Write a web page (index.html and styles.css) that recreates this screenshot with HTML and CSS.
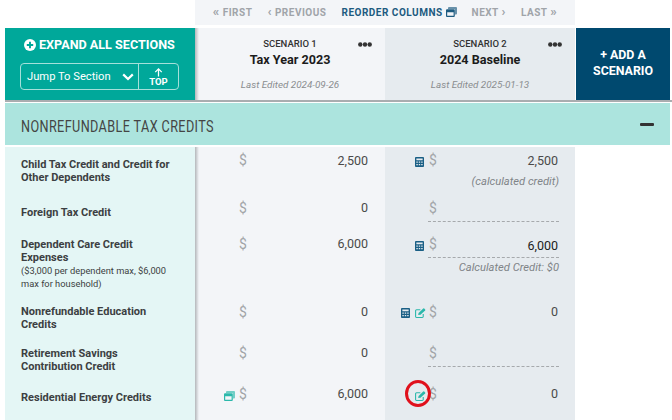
FILE: index.html
```html
<!DOCTYPE html>
<html lang="en">
<head>
  <meta charset="UTF-8" />
  <title>Scenario Compare</title>
  <link rel="stylesheet" href="styles.css">
</head>
<body>
  <svg class="defs" width="0" height="0">
    <symbol id="calc" viewBox="0 0 10 11">
      <path fill="currentColor" fill-rule="evenodd" d="M1 0h8a1 1 0 0 1 1 1v9a1 1 0 0 1-1 1H1a1 1 0 0 1-1-1V1a1 1 0 0 1 1-1zm.5 1.5v2h7v-2zm0 3.5v1.3h1.6V5zm2.7 0v1.3h1.6V5zm2.7 0v1.3h1.6V5zM1.5 7.6v1.6h1.6V7.6zm2.7 0v1.6h1.6V7.6zm2.7 0v1.6h1.6V7.6z"/>
    </symbol>
    <symbol id="edit" viewBox="0 0 12 11">
      <path fill="none" stroke="currentColor" stroke-width="1.2" d="M9 6.5V9.4a1 1 0 0 1-1 1H1.6a1 1 0 0 1-1-1V3a1 1 0 0 1 1-1h4.2"/>
      <path fill="currentColor" d="M3.4 7.8l.5-2.2L9 .6a.8.8 0 0 1 1.1 0l1 1a.8.8 0 0 1 0 1.1L6 7.4z"/>
    </symbol>
    <symbol id="windows" viewBox="0 0 11 10">
      <path fill="currentColor" opacity=".65" d="M3 0h7a1 1 0 0 1 1 1v5.5a1 1 0 0 1-1 1H9V3a1 1 0 0 0-1-1H2V1a1 1 0 0 1 1-1z"/>
      <path fill="currentColor" fill-rule="evenodd" d="M1 2.2h6.8a1 1 0 0 1 1 1V9a1 1 0 0 1-1 1H1a1 1 0 0 1-1-1V3.2a1 1 0 0 1 1-1zm.2 3V8.8h6.4V5.2z"/>
    </symbol>
    <symbol id="dots" viewBox="0 0 14 5">
      <circle cx="2.3" cy="2.5" r="2.2" fill="currentColor"/>
      <circle cx="7" cy="2.5" r="2.2" fill="currentColor"/>
      <circle cx="11.7" cy="2.5" r="2.2" fill="currentColor"/>
    </symbol>
  </svg>

  <nav class="pager">
    <span class="pager-item"><span class="arr">&laquo;</span> FIRST</span>
    <span class="pager-item"><span class="arr">&lsaquo;</span> PREVIOUS</span>
    <span class="pager-item reorder">REORDER COLUMNS <svg class="icon-win"><use href="#windows"/></svg></span>
    <span class="pager-item">NEXT <span class="arr">&rsaquo;</span></span>
    <span class="pager-item">LAST <span class="arr">&raquo;</span></span>
  </nav>

  <header class="head-row">
    <div class="tools">
      <div class="expand">
        <svg class="plus" viewBox="0 0 12 12"><circle cx="6" cy="6" r="6" fill="#fff"/><path d="M6 2.8v6.4M2.8 6h6.4" stroke="#00a89a" stroke-width="1.9"/></svg>
        <span>EXPAND ALL SECTIONS</span>
      </div>
      <div class="jump">
        <div class="jump-select">
          <span>Jump To Section</span>
          <svg class="chev" viewBox="0 0 12 8"><path d="M1.2 1.4L6 6l4.8-4.6" fill="none" stroke="#fff" stroke-width="2.2"/></svg>
        </div>
        <div class="jump-top">
          <svg class="arrow" viewBox="0 0 10 10"><path d="M5 9.5V1.2M1.4 4.6L5 1l3.6 3.6" fill="none" stroke="#fff" stroke-width="1.4"/></svg>
          <span>TOP</span>
        </div>
      </div>
    </div>
    <div class="scenario col-one">
      <svg class="dots"><use href="#dots"/></svg>
      <div class="scenario-num">SCENARIO 1</div>
      <div class="scenario-name">Tax Year 2023</div>
      <div class="scenario-date">Last Edited 2024-09-26</div>
    </div>
    <div class="scenario col-two">
      <svg class="dots"><use href="#dots"/></svg>
      <div class="scenario-num">SCENARIO 2</div>
      <div class="scenario-name">2024 Baseline</div>
      <div class="scenario-date">Last Edited 2025-01-13</div>
    </div>
    <div class="add-scenario">+ ADD A SCENARIO</div>
  </header>

  <section class="section-bar">
    <span class="section-title">NONREFUNDABLE TAX CREDITS</span>
    <span class="minus"></span>
  </section>

  <div class="rows">
    <div class="row r1">
      <div class="label"><b>Child Tax Credit and Credit for Other Dependents</b></div>
      <div class="cell col-one">
        <div class="field"><span class="icons"></span><div class="input"><span class="dollar">$</span><span class="val">2,500</span></div></div>
      </div>
      <div class="cell col-two">
        <div class="field"><span class="icons"><svg class="icon-calc"><use href="#calc"/></svg></span><div class="input"><span class="dollar">$</span><span class="val">2,500</span></div></div>
        <div class="note">(calculated credit)</div>
      </div>
    </div>

    <div class="row r2">
      <div class="label"><b>Foreign Tax Credit</b></div>
      <div class="cell col-one">
        <div class="field"><span class="icons"></span><div class="input"><span class="dollar">$</span><span class="val">0</span></div></div>
      </div>
      <div class="cell col-two">
        <div class="field"><span class="icons"></span><div class="input dashed"><span class="dollar">$</span></div></div>
      </div>
    </div>

    <div class="row r3">
      <div class="label"><b>Dependent Care Credit Expenses</b><small>($3,000 per dependent max, $6,000 max for household)</small></div>
      <div class="cell col-one">
        <div class="field"><span class="icons"></span><div class="input"><span class="dollar">$</span><span class="val">6,000</span></div></div>
      </div>
      <div class="cell col-two">
        <div class="field"><span class="icons"><svg class="icon-calc"><use href="#calc"/></svg></span><div class="input dashed"><span class="dollar">$</span><span class="val typed">6,000</span></div></div>
        <div class="note tight">Calculated Credit: $0</div>
      </div>
    </div>

    <div class="row r4">
      <div class="label"><b>Nonrefundable Education Credits</b></div>
      <div class="cell col-one">
        <div class="field"><span class="icons"></span><div class="input"><span class="dollar">$</span><span class="val">0</span></div></div>
      </div>
      <div class="cell col-two">
        <div class="field"><span class="icons"><svg class="icon-calc"><use href="#calc"/></svg><svg class="icon-edit"><use href="#edit"/></svg></span><div class="input"><span class="dollar">$</span><span class="val">0</span></div></div>
      </div>
    </div>

    <div class="row r5">
      <div class="label"><b>Retirement Savings Contribution Credit</b></div>
      <div class="cell col-one">
        <div class="field"><span class="icons"></span><div class="input"><span class="dollar">$</span><span class="val">0</span></div></div>
      </div>
      <div class="cell col-two">
        <div class="field"><span class="icons"></span><div class="input dashed"><span class="dollar">$</span></div></div>
      </div>
    </div>

    <div class="row r6">
      <div class="label"><b>Residential Energy Credits</b></div>
      <div class="cell col-one">
        <div class="field"><span class="icons"><svg class="icon-win teal"><use href="#windows"/></svg></span><div class="input"><span class="dollar">$</span><span class="val">6,000</span></div></div>
      </div>
      <div class="cell col-two">
        <div class="field"><span class="icons"><svg class="icon-edit"><use href="#edit"/></svg><span class="red-ring"></span></span><div class="input"><span class="dollar">$</span><span class="val">0</span></div></div>
      </div>
    </div>
  </div>
</body>
</html>
```

FILE: styles.css
```css
html, body {
  height: 100%;
}
body {
  margin: 0;
  padding-left: 5px;
  overflow: hidden;
  background-color: #fff;
  color: #444;
  font-family: Roboto, sans-serif;
  box-sizing: border-box;
}
.defs {
  position: absolute;
}

/* pager */
.pager {
  display: flex;
  justify-content: center;
  gap: 15px;
  margin-left: 190px;
  width: 380px;
  height: 25px;
  margin-bottom: 3px;
  background-color: #f3f5f8;
  font-size: 10px;
  font-weight: 700;
  letter-spacing: 0.5px;
  line-height: 25px;
  color: #a0a4a9;
}
.pager-item {
  white-space: nowrap;
}
.arr {
  font-size: 13px;
  line-height: 10px;
}
.reorder {
  color: #1d5b80;
}
.icon-win {
  width: 11px;
  height: 10px;
  vertical-align: -1px;
}
.icon-win.teal {
  margin-right: 1px;
  color: #2bb8ab;
}

/* header */
.head-row {
  display: grid;
  grid-template-columns: 190px 190px 190px 95px;
  height: 74px;
  border-bottom: 2px solid #a9adb0;
  box-sizing: border-box;
  margin-bottom: 1px;
}
.tools {
  background-color: #00a89a;
  color: #fff;
  padding: 9px 15px 0;
  box-sizing: border-box;
}
.expand {
  display: flex;
  align-items: center;
  gap: 3px;
  padding-left: 4px;
  font-size: 12.6px;
  font-weight: 700;
  line-height: 16px;
  white-space: nowrap;
}
.plus {
  flex: none;
  width: 12px;
  height: 12px;
}
.jump {
  display: flex;
  height: 27px;
  margin-top: 10px;
  width: 159px;
  border: 1px solid #a5e0da;
  border-radius: 4px;
  box-sizing: border-box;
}
.jump-select {
  flex: 1;
  display: flex;
  align-items: center;
  justify-content: space-between;
  padding: 0 4px 0 6px;
  border-right: 1px solid #a5e0da;
  font-size: 11.2px;
}
.chev {
  width: 12px;
  height: 8px;
}
.jump-top {
  width: 39px;
  display: flex;
  flex-direction: column;
  align-items: center;
  font-size: 9.5px;
  font-weight: 700;
  line-height: 10px;
  padding-top: 4px;
  box-sizing: border-box;
}
.arrow {
  width: 9px;
  height: 9px;
}
.scenario {
  position: relative;
  text-align: center;
  padding-top: 9px;
  box-sizing: border-box;
}
.col-one {
  background: linear-gradient(to right, #b4b7ba, #f3f5f8 4px);
}
.col-two {
  background-color: #e6ebef;
}
.dots {
  position: absolute;
  top: 14px;
  right: 13px;
  width: 14px;
  height: 5px;
  color: #333;
}
.scenario-num {
  font-size: 9.5px;
  font-weight: 500;
  line-height: 13px;
  color: #333;
}
.scenario-name {
  font-size: 12.6px;
  font-weight: 700;
  line-height: 20px;
  color: #1c1c1c;
}
.scenario-date {
  margin-top: 8px;
  font-size: 9.9px;
  font-style: italic;
  line-height: 14px;
  color: #8a8d90;
}
.add-scenario {
  margin-left: 1px;
  padding: 19px 10px 0;
  background-color: #00496f;
  color: #fff;
  font-size: 12.4px;
  font-weight: 700;
  line-height: 16px;
  text-align: center;
}

/* section bar */
.section-bar {
  display: flex;
  align-items: center;
  justify-content: space-between;
  width: 665px;
  height: 42px;
  padding: 0 16px;
  box-sizing: border-box;
  background-color: #ace4de;
  margin-bottom: 2px;
}
.section-title {
  display: inline-block;
  margin-top: 4px;
  font-size: 16px;
  letter-spacing: 0.5px;
  color: #444;
  white-space: nowrap;
  transform: scaleX(0.79);
  transform-origin: left center;
}
.minus {
  width: 14px;
  height: 3px;
  border-radius: 1px;
  background-color: #333;
}

/* rows */
.rows {
  display: flex;
  flex-direction: column;
}
.row {
  display: grid;
  grid-template-columns: 190px 190px 190px;
}
.label {
  padding: 0 22px 0 16px;
  background-color: #e4f6f5;
  font-size: 11px;
  line-height: 13px;
  color: #3c3f42;
}
.label b {
  display: block;
  font-weight: 700;
}
.label small {
  display: block;
  font-size: 9.3px;
  line-height: 13px;
}
.cell {
  box-sizing: border-box;
}
.field {
  display: flex;
}
.icons {
  position: relative;
  display: flex;
  justify-content: flex-end;
  gap: 3px;
  width: 43px;
  padding: 7px 2px 0 0;
  box-sizing: border-box;
}
.input {
  display: flex;
  justify-content: space-between;
  width: 131px;
  height: 24px;
  box-sizing: border-box;
  padding: 0 1px 0 1px;
  line-height: 20px;
  font-size: 12.5px;
}
.dashed {
  border-bottom: 1px dashed #a6a9ac;
}
.dollar {
  color: #a2a5a8;
  font-size: 14px;
}
.val {
  color: #4a4a4a;
}
.val.typed {
  padding-top: 2px;
  color: #222;
}
.note {
  width: 174px;
  margin-top: 0;
  text-align: right;
  font-size: 11.2px;
  font-style: italic;
  line-height: 16px;
  color: #808488;
}
.note.tight {
  margin-top: 2px;
}
.icon-calc {
  width: 9px;
  height: 10px;
  margin-right: 2px;
  color: #1a5f85;
}
.icon-edit {
  width: 11px;
  height: 10px;
  color: #2bb8ab;
}
.red-ring {
  position: absolute;
  top: -4px;
  left: 20px;
  width: 26px;
  height: 27px;
  border: 3px solid #e0111c;
  border-radius: 50%;
  box-sizing: border-box;
}

.r1 { height: 50px; }
.r1 .label { padding-top: 11px; }
.r1 .cell { padding-top: 3px; }
.r1 .val { padding-top: 1px; }
.r2 { height: 32px; }
.r2 .label { padding-top: 9px; }
.r2 .cell { padding-top: 1px; }
.r3 { height: 67px; }
.r3 .label { padding-top: 9px; }
.r3 .cell { padding-top: 5px; }
.r4 { height: 43px; }
.r4 .label { padding-top: 9px; }
.r4 .cell { padding-top: 6px; }
.r4 .icons { padding-top: 6px; }
.r5 { height: 42px; }
.r5 .label { padding-top: 8px; }
.r5 .cell { padding-top: 4px; }
.r6 { height: 39px; }
.r6 .label { padding-top: 10px; }
.r6 .cell { padding-top: 3px; }
```
